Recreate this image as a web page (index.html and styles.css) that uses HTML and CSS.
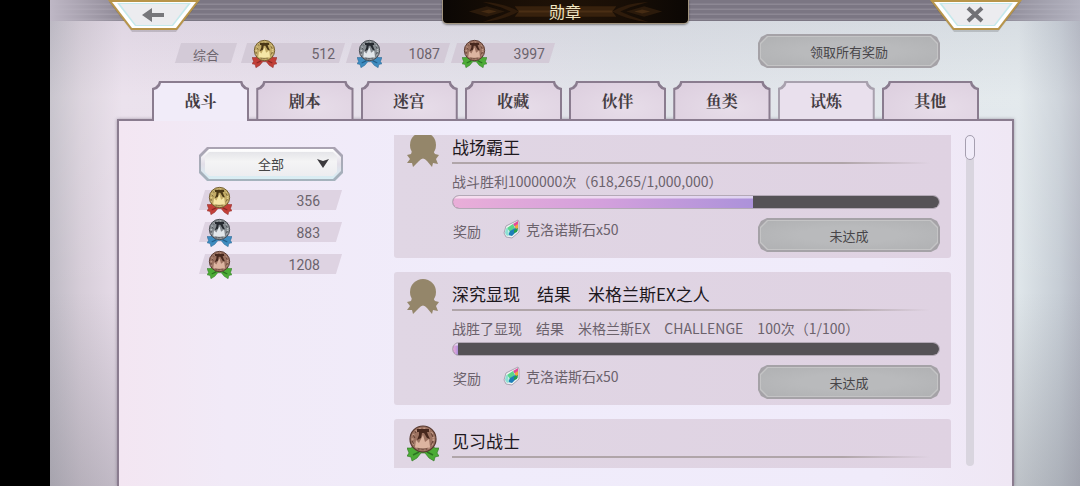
FILE: index.html
```html
<!DOCTYPE html>
<html lang="zh-CN">
<head>
    <meta charset="UTF-8">
    <meta name="viewport" content="width=device-width, initial-scale=1.0">
    <title>勋章</title>
    <link rel="stylesheet" href="styles.css">
</head>
<body>
    <!-- Shared shapes -->
    <svg class="defs" aria-hidden="true">
        <symbol id="medal" viewBox="0 0 32 37">
            <path d="M7 21 L4 23 L0 23 L2 28 L0 31 L4 32 L5 36 L10 33 L14 28 L18 28 L22 33 L27 36 L28 32 L32 31 L30 28 L32 23 L28 23 L25 21 Z" fill="var(--ribbon)" stroke="var(--ribbon-dark)" stroke-width=".6"/>
            <path d="M6 30 L12 27 M26 30 L20 27" stroke="var(--ribbon-dark)" stroke-width="1.5"/>
            <circle cx="16" cy="14" r="13" fill="var(--disc)" stroke="var(--disc-dark)" stroke-width="1.2"/>
            <circle cx="16" cy="14" r="10.5" fill="none" stroke="var(--shine)" stroke-width="2" stroke-dasharray="2 2.5" opacity=".6"/>
            <path d="M10 4 H22 V7 H20 L21 10 L23 14 L20 13 L17 8 H15 L14 13 L10 15 L12 10 V7 H10 Z" fill="var(--mark)"/>
            <path d="M8 22 L9 15 L12 18 L16 10 L18 17 L22 14 L23 22 L16 24 Z" fill="var(--shine)"/>
            <path d="M6 10 L8 13 M24 8 L26 12 M5 16 L7 19 M24 20 L26 16 M11 24 L20 24 M8 6 L9 8" stroke="var(--mark)" stroke-width="1" opacity=".7"/>
        </symbol>
        <symbol id="blank" viewBox="0 0 32 37">
            <circle cx="16" cy="14" r="13"/>
            <path d="M5 20 L4 23 L0 24 L3 28 L0 32 L5 32 L6 36 L12 30 Q16 25 20 30 L25 36 L26 32 L31 33 L29 28 L32 24 L28 23 L26 20 Z"/>
        </symbol>
        <symbol id="gem" viewBox="0 0 18 20">
            <path d="M15 1 L16 3 L16 13 L9 19 L3 18 L1 14 L3 7 Z" fill="#eef4f2" stroke="#aaa2b2" stroke-width="1"/>
            <path d="M15 2 L10 5 L12 8 L15 6 Z" fill="#e4499a"/>
            <path d="M10 5 L4 9 L7 13 L12 9 Z" fill="#58d68c"/>
            <path d="M12 7 L15 5 L15 10 L12 11 Z" fill="#f0a63e"/>
            <path d="M7 12 L12 9 L15 11 L9 17 L5 16 Z" fill="#1f7fb8"/>
            <path d="M11 11 L15 9 L14 13 L11 14 Z" fill="#23a04b"/>
            <path d="M3 9 L5 10 L6 16 L4 17 L2 14 Z" fill="#8de0d4"/>
        </symbol>
        <symbol id="trapezoid" viewBox="0 0 92 34">
            <path d="M1 2 L24 32 H68 L91 2 Z" fill="#000" opacity=".15"/>
            <path d="M0 0 L23 30 H69 L92 0 Z" fill="#b8954a"/>
            <path d="M4 2 L24 28 H68 L88 2 Z" fill="#fff"/>
            <path d="M9 3 L27 26 H65 L83 3 Z" fill="#c4e9ec"/>
            <path d="M12 4 L28 25 H64 L80 4 Z" fill="#ececef"/>
        </symbol>
    </svg>

    <main class="screen">
        <header class="topbar">
            <button class="corner-btn" aria-label="返回">
                <svg class="corner-art" width="92" height="34">
                    <use href="#trapezoid"/>
                    <path d="M34 15 L44 8 V13 H56 V17 H44 V22 Z" fill="#77777b"/>
                </svg>
            </button>
            <h1 class="title">
                <svg class="title-art" viewBox="0 0 246 22" preserveAspectRatio="none" aria-hidden="true">
                    <path d="M40 2 Q62 3 76 11 Q62 19 40 21 L58 15 L68 11 L58 7 Z M206 2 Q184 3 170 11 Q184 19 206 21 L188 15 L178 11 L188 7 Z" fill="#2e1b0b"/>
                    <path d="M72 6 H174 L170 11 L174 16 H72 L76 11 Z" fill="#37210d"/>
                    <path d="M76 11 H170" stroke="#4a2e14" stroke-width="2"/>
                    <path d="M26 11 L44 6 L62 11 L44 16 Z M220 11 L202 6 L184 11 L202 16 Z" fill="#2b1a0b"/>
                    <path d="M38 11 L46 9 L54 11 L46 13 Z M208 11 L200 9 L192 11 L200 13 Z" fill="#452b13"/>
                </svg>
                <span>勋章</span>
            </h1>
            <button class="corner-btn" aria-label="关闭">
                <svg class="corner-art" width="92" height="34">
                    <use href="#trapezoid"/>
                    <path d="M38 8 L52 21 M52 8 L38 21" stroke="#717175" stroke-width="4"/>
                </svg>
            </button>
        </header>

        <section class="summary">
            <div class="chip chip-label">综合</div>
            <div class="chip gold"><svg class="medal"><use href="#medal"/></svg><span>512</span></div>
            <div class="chip silver"><svg class="medal"><use href="#medal"/></svg><span>1087</span></div>
            <div class="chip bronze"><svg class="medal"><use href="#medal"/></svg><span>3997</span></div>
            <button class="plate-btn claim-all"><span>领取所有奖励</span></button>
        </section>

        <nav class="tabs">
            <button class="tab active"><span>战斗</span></button>
            <button class="tab"><span>剧本</span></button>
            <button class="tab"><span>迷宫</span></button>
            <button class="tab"><span>收藏</span></button>
            <button class="tab"><span>伙伴</span></button>
            <button class="tab"><span>鱼类</span></button>
            <button class="tab light"><span>试炼</span></button>
            <button class="tab"><span>其他</span></button>
        </nav>

        <section class="panel">
            <aside class="sidebar">
                <div class="picker">
                    <select class="picker-select" aria-label="筛选">
                        <option>全部</option>
                    </select>
                    <svg class="picker-arrow" viewBox="0 0 12 9"><path d="M0 0 L6 2 L12 0 L6 9 Z"/></svg>
                </div>
                <div class="chip gold"><svg class="medal"><use href="#medal"/></svg><span>356</span></div>
                <div class="chip silver"><svg class="medal"><use href="#medal"/></svg><span>883</span></div>
                <div class="chip bronze"><svg class="medal"><use href="#medal"/></svg><span>1208</span></div>
            </aside>

            <div class="list-view">
                <div class="list">
                    <article class="card">
                        <svg class="card-medal blank"><use href="#blank"/></svg>
                        <div class="card-body">
                            <h2>战场霸王</h2>
                            <p class="desc">战斗胜利1000000次（618,265/1,000,000）</p>
                            <progress class="bar" value="618265" max="1000000" aria-label="战场霸王"></progress>
                            <div class="reward">
                                <span class="reward-label">奖励</span>
                                <svg class="gem"><use href="#gem"/></svg>
                                <span class="reward-name">克洛诺斯石x50</span>
                                <button class="plate-btn"><span>未达成</span></button>
                            </div>
                        </div>
                    </article>
                    <article class="card">
                        <svg class="card-medal blank"><use href="#blank"/></svg>
                        <div class="card-body">
                            <h2>深究显现　结果　米格兰斯EX之人</h2>
                            <p class="desc">战胜了显现　结果　米格兰斯EX　CHALLENGE　100次（1/100）</p>
                            <progress class="bar" value="1" max="100" aria-label="深究显现"></progress>
                            <div class="reward">
                                <span class="reward-label">奖励</span>
                                <svg class="gem"><use href="#gem"/></svg>
                                <span class="reward-name">克洛诺斯石x50</span>
                                <button class="plate-btn"><span>未达成</span></button>
                            </div>
                        </div>
                    </article>
                    <article class="card bronze">
                        <svg class="card-medal"><use href="#medal"/></svg>
                        <div class="card-body">
                            <h2>见习战士</h2>
                        </div>
                    </article>
                </div>
            </div>

            <div class="scrollbar"><div class="thumb"></div></div>
        </section>
    </main>
</body>
</html>
```
FILE: styles.css
```css
* {
    box-sizing: border-box;
}

body {
    margin: 0;
    padding-left: 50px;
    height: 100vh;
    background: #000;
    font-family: "Noto Sans CJK SC", sans-serif;
    font-size: 14px;
    color: #6b626c;
    overflow: hidden;
}

h1, h2, p {
    margin: 0;
    font-weight: 400;
}

button, select {
    margin: 0;
    padding: 0;
    border: none;
    background: none;
    font-family: inherit;
    color: inherit;
    cursor: pointer;
}

.defs {
    position: absolute;
    width: 0;
    height: 0;
}

.screen {
    display: flex;
    flex-direction: column;
    height: 100vh;
    background:
        linear-gradient(to bottom, rgba(150, 150, 165, .15), rgba(255, 255, 255, .15) 20%, rgba(255, 255, 255, 0) 60%, rgba(110, 110, 120, .3)),
        linear-gradient(to right, #bfbbc5, #d6cdd8 3%, #e8ddea 7%, #e5dce9 20%, #dcdfe6 55%, #dfe6ea 94%, #c6cdd5 98%, #b5b9c4);
}

/* Top bar */
.topbar {
    display: flex;
    justify-content: space-between;
    height: 21px;
    padding: 0 58px;
    background:
        linear-gradient(to right, rgba(190, 183, 197, 1), rgba(190, 183, 197, 0) 10%, rgba(190, 183, 197, 0) 88%, rgba(185, 185, 198, .9)),
        repeating-linear-gradient(to bottom, #7b7683 0, #7b7683 3px, #8d8894 4px, #8d8894 5px);
}

.corner-btn {
    width: 92px;
    height: 34px;
}

.corner-art {
    display: block;
}

.title {
    position: relative;
    display: flex;
    align-items: center;
    justify-content: center;
    width: 247px;
    height: 24px;
    border: 1px solid #a2957f;
    border-top: none;
    border-radius: 0 0 5px 5px;
    background: linear-gradient(to right, #0b0704, #1a0f06 30%, #1f1207 50%, #1a0f06 70%, #0b0704);
    box-shadow: 0 1px 2px rgba(0, 0, 0, .4);
    font-size: 16px;
    line-height: 22px;
    color: #f0e5c2;
}

.title span {
    position: relative;
    padding-bottom: 2px;
}

.title-art {
    position: absolute;
    inset: 0;
    width: 100%;
    height: 100%;
}

/* Medal counters */
.summary {
    display: flex;
    align-items: center;
    gap: 1px;
    margin-top: 13px;
    padding: 0 140px 0 125px;
}

.chip {
    position: relative;
    z-index: 0;
    display: flex;
    align-items: center;
    justify-content: space-between;
    width: 104px;
    height: 20px;
    padding: 3px 10px 0 11px;
    font-family: Roboto, sans-serif;
    font-size: 14px;
    color: #6b636c;
}

.chip::before {
    content: "";
    position: absolute;
    z-index: -1;
    inset: 0 3px;
    background: #d3cad7;
    transform: skewX(-17deg);
}

.summary .chip {
    margin-top: 3px;
}

.chip-label {
    justify-content: center;
    width: 62px;
    margin-right: 3px;
    padding: 3px 0 0;
    font-family: inherit;
    font-size: 13px;
}

.medal {
    flex: none;
    width: 25px;
    height: 30px;
}

.gold {
    --disc: #c2aa66;
    --disc-dark: #6e5a2d;
    --mark: #4a3716;
    --shine: #f5e6a6;
    --ribbon: #c23f38;
    --ribbon-dark: #8a2824;
}

.silver {
    --disc: #858b90;
    --disc-dark: #44494e;
    --mark: #25292f;
    --shine: #e2e7ea;
    --ribbon: #3e8cc0;
    --ribbon-dark: #235f8b;
}

.bronze {
    --disc: #9b7160;
    --disc-dark: #56382f;
    --mark: #46271d;
    --shine: #dcb4a0;
    --ribbon: #4cac36;
    --ribbon-dark: #2b7320;
}

/* Octagonal grey button */
.plate-btn {
    position: relative;
    z-index: 0;
    width: 182px;
    height: 34px;
    background: #a5a2a7;
    clip-path: polygon(3px 3px, 9px 0, calc(100% - 9px) 0, calc(100% - 3px) 3px, 100% 9px, 100% calc(100% - 9px), calc(100% - 3px) calc(100% - 3px), calc(100% - 9px) 100%, 9px 100%, 3px calc(100% - 3px), 0 calc(100% - 9px), 0 9px);
    font-size: 13px;
    color: #474548;
}

.plate-btn::before,
.plate-btn::after {
    content: "";
    position: absolute;
    z-index: -1;
    inset: 2px;
    background: #c4c4c5;
    clip-path: polygon(7px 0, calc(100% - 7px) 0, 100% 7px, 100% calc(100% - 7px), calc(100% - 7px) 100%, 7px 100%, 0 calc(100% - 7px), 0 7px);
}

.plate-btn::after {
    inset: 3px;
    background: radial-gradient(ellipse at center, #b9babc 40%, #b0b1b3);
}

.claim-all {
    margin-left: auto;
}

/* Tabs */
.tabs {
    position: relative;
    z-index: 1;
    display: flex;
    gap: 7px;
    margin: 13px 66px 0 67px;
    padding: 0 35px;
}

.tab {
    --notch: polygon(0 100%, 0 7px, 3px 6px, 6px 3px, 7px 0, calc(100% - 7px) 0, calc(100% - 6px) 3px, calc(100% - 3px) 6px, 100% 7px, 100% 100%);
    position: relative;
    z-index: 0;
    flex: 1;
    height: 38px;
    background: #8a7c8f;
    clip-path: var(--notch);
    font-family: "Noto Serif CJK SC", "Noto Sans CJK SC", serif;
    font-size: 16px;
    font-weight: 700;
    color: #453d43;
}

.tab::before {
    content: "";
    position: absolute;
    z-index: -1;
    inset: 2px 2px 0;
    background: radial-gradient(ellipse at 60% 70%, #e7dde9, #dccede);
    clip-path: var(--notch);
}

.tab.light {
    background: #a8a1ae;
}

.tab.light::before {
    background: #e9e0ed;
}

.tab.active {
    margin-bottom: -2px;
    padding-bottom: 2px;
    height: 40px;
}

.tab.active::before {
    background: #f1ecf9;
}

/* Main panel */
.panel {
    display: flex;
    align-items: flex-start;
    flex: 1;
    min-height: 0;
    margin: 0 66px 0 67px;
    padding: 14px 38px 18px 80px;
    border: 2px solid #8a7c8f;
    border-bottom: none;
    background: linear-gradient(to right, #f3e6f2, #f1eaf7 12%, #f0ecfb 40%, #f0ebfa 85%, #efe7f4);
    box-shadow: 0 0 3px rgba(90, 80, 100, .5);
}

.sidebar {
    display: flex;
    flex-direction: column;
    gap: 12px;
    width: 144px;
    margin: 12px 51px 0 0;
}

.sidebar .chip {
    width: 143px;
    padding: 2px 22px 0 8px;
}

.sidebar .chip::before {
    background: #ded3e2;
}

.picker {
    --cut: polygon(8px 0, calc(100% - 8px) 0, 100% 8px, 100% calc(100% - 8px), calc(100% - 8px) 100%, 8px 100%, 0 calc(100% - 8px), 0 8px);
    position: relative;
    height: 34px;
    margin-bottom: -3px;
    padding: 1px;
    background: linear-gradient(to bottom, #aaa3b2, #a5b3bd);
    clip-path: var(--cut);
}

.picker::before {
    content: "";
    position: absolute;
    inset: 2px;
    background: linear-gradient(to bottom, #fff, #e3dfe8 50%, #d8eef4);
    clip-path: var(--cut);
}

.picker-select {
    position: relative;
    appearance: none;
    display: block;
    width: calc(100% - 10px);
    height: 24px;
    margin: 4px 5px;
    padding-bottom: 2px;
    background: linear-gradient(to bottom, #e5e5e9, #f4f4f5 40%, #ededf0);
    clip-path: polygon(4px 0, calc(100% - 4px) 0, 100% 4px, 100% calc(100% - 4px), calc(100% - 4px) 100%, 4px 100%, 0 calc(100% - 4px), 0 4px);
    font-size: 13px;
    text-align: center;
    text-align-last: center;
    color: #444;
}

.picker-arrow {
    position: absolute;
    right: 14px;
    top: 12px;
    width: 12px;
    height: 9px;
    fill: #3c3a3e;
    pointer-events: none;
}

/* Medal list */
.list-view {
    flex: 1;
    align-self: stretch;
    overflow: hidden;
}

/* the list is scrolled down a little */
.list {
    display: flex;
    flex-direction: column;
    gap: 14px;
    margin-top: -10px;
}

.card {
    display: flex;
    flex: none;
    height: 133px;
    padding: 6px 11px 0 13px;
    border-radius: 3px;
    background: linear-gradient(to right, #e0d6e4, #dfd2e2);
}

.card-medal {
    flex: none;
    width: 32px;
    height: 37px;
    margin-right: 13px;
}

.blank {
    fill: #94866a;
}

.card-body {
    flex: 1;
}

.card h2 {
    height: 33px;
    padding-top: 6px;
    font-size: 17px;
    line-height: 20px;
    color: #1d181d;
    background: linear-gradient(to right, #b0a5a9 80%, rgba(176, 165, 169, 0) 98%) left bottom / 100% 2px no-repeat;
}

.desc {
    line-height: 20px;
    margin-top: 7px;
}

.bar {
    appearance: none;
    display: block;
    width: 100%;
    height: 14px;
    margin-top: 4px;
    border: 1px solid #b3a9b6;
    border-radius: 7px;
    background: #555256;
    overflow: hidden;
}

.bar::-webkit-progress-bar {
    background: #555256;
}

.bar::-webkit-progress-value {
    background:
        linear-gradient(to bottom, rgba(255, 255, 255, .6) 2px, rgba(255, 255, 255, 0) 3px),
        linear-gradient(to right, #e9aed8, #d3a0dc 50%, #ac92da);
}

.reward {
    display: flex;
    align-items: center;
    height: 34px;
    margin-top: 9px;
}

.reward-label {
    margin-left: 1px;
    padding-bottom: 8px;
}

.gem {
    width: 18px;
    height: 20px;
    margin: 0 5px 12px 22px;
}

.reward-name {
    padding-bottom: 12px;
}

.reward .plate-btn {
    margin-left: auto;
}

/* Scrollbar */
.scrollbar {
    align-self: stretch;
    width: 8px;
    margin: 0 0 2px 15px;
    border-radius: 4px;
    background: #d9d5df;
}

.thumb {
    width: 10px;
    height: 25px;
    margin-left: -1px;
    border: 1px solid #a69fb0;
    border-radius: 5px;
    background: #f1ecf9;
}
```
